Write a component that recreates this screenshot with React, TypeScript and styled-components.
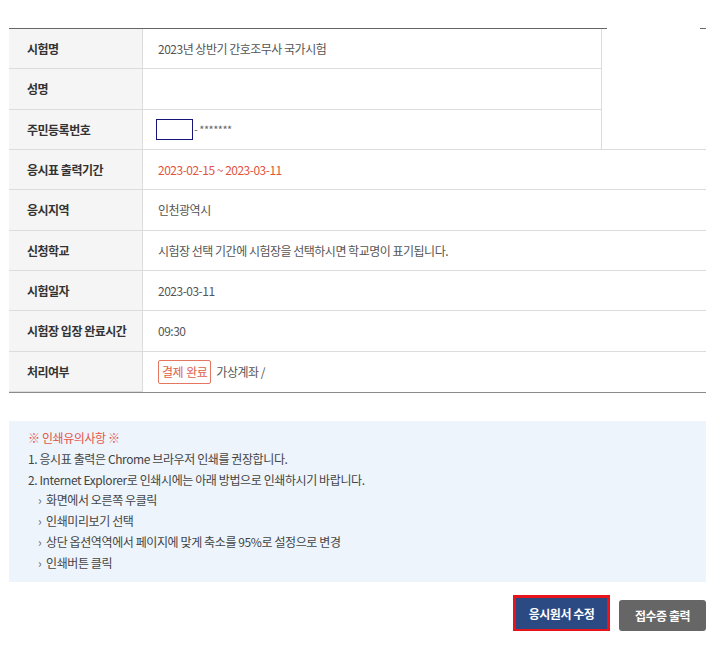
import React from "react";
import styled, { createGlobalStyle } from "styled-components";

const Global = createGlobalStyle`
  html, body { margin: 0; padding: 0; background: #fff; }
  body { font-family: "Noto Sans CJK KR", "Noto Sans", sans-serif; color: #444; }
  * { box-sizing: border-box; }
`;

const Page = styled.div`
  width: 728px;
  padding: 28px 22px 0 9px;
`;

const TopRule = styled.div`
  height: 1px;
  background: linear-gradient(to right, #666 0, #666 598px, transparent 598px, transparent 691px, #666 691px);
`;

const Grid = styled.div`
  display: grid;
  grid-template-columns: 134px 458px 105px;
  border-bottom: 1px solid #8a8a8a;
`;

const Label = styled.div`
  grid-column: 1;
  height: 40.33px;
  display: flex;
  align-items: center;
  padding-left: 18px;
  background: #f5f5f5;
  border-right: 1px solid #dcdcdc;
  border-bottom: 1px solid #dcdcdc;
  font-size: 12px;
  font-weight: 700;
  color: #333;
  letter-spacing: -0.5px;
  &:last-of-type { border-bottom: none; }
`;

const Value = styled.div<{ $wide?: boolean; $last?: boolean; $tone?: string }>`
  grid-column: ${(p) => (p.$wide ? "2 / 4" : "2")};
  height: 40.33px;
  display: flex;
  align-items: center;
  gap: 5px;
  padding-left: 15px;
  border-bottom: ${(p) => (p.$last ? "none" : "1px solid #dcdcdc")};
  font-size: 12px;
  color: ${(p) => p.$tone ?? "#555"};
  letter-spacing: -0.5px;
`;

const Photo = styled.div`
  grid-column: 3;
  grid-row: 1 / 4;
  border-left: 1px solid #dcdcdc;
  border-bottom: 1px solid #dcdcdc;
`;

const IdInput = styled.span`
  display: inline-block;
  width: 37px;
  height: 21px;
  border: 1px solid #16167a;
  margin-left: -2px;
`;

const Masked = styled.span`
  font-size: 11px;
  color: #666;
  margin-left: -4px;
  align-self: flex-start;
  margin-top: 11px;
`;

const Badge = styled.span`
  display: inline-flex;
  align-items: center;
  height: 24px;
  padding: 0 3px;
  border: 1px solid #e5765f;
  border-radius: 2px;
  color: #e0604c;
  font-size: 12px;
  letter-spacing: -0.5px;
  word-spacing: 1px;
`;

const Notice = styled.div`
  margin-top: 28px;
  background: #edf4fb;
  padding: 7px 19px 8px;
  font-size: 12px;
  line-height: 20.8px;
  color: #444;
  letter-spacing: -0.4px;
`;

const NoticeTitle = styled.div`
  color: #e4554a;
`;

const SubItem = styled.div`
  padding-left: 10px;
  &::before {
    content: "›";
    display: inline-block;
    width: 8px;
    color: #666;
  }
`;

const Actions = styled.div`
  display: flex;
  justify-content: flex-end;
  align-items: center;
  gap: 12px;
  margin-top: 18px;
`;

const Button = styled.button<{ $primary?: boolean }>`
  height: 31px;
  padding: 0;
  white-space: nowrap;
  border: none;
  border-radius: ${(p) => (p.$primary ? "0" : "3px")};
  background: ${(p) => (p.$primary ? "#2b4a84" : "#666666")};
  color: #fff;
  font-family: "Noto Sans CJK KR", sans-serif;
  font-size: 12px;
  font-weight: 700;
  letter-spacing: -0.5px;
  outline: ${(p) => (p.$primary ? "3px solid #e8141c" : "none")};
  width: ${(p) => (p.$primary ? "91px" : "87px")};
  margin-top: ${(p) => (p.$primary ? "-3px" : "0")};
`;

export default function App() {
  return (
    <Page>
      <Global />
      <TopRule />
      <Grid>
        <Label>시험명</Label>
        <Value>2023년 상반기 간호조무사 국가시험</Value>
        <Photo />
        <Label>성명</Label>
        <Value />
        <Label>주민등록번호</Label>
        <Value>
          <IdInput />
          <Masked>- *******</Masked>
        </Value>
        <Label>응시표 출력기간</Label>
        <Value $wide $tone="#e2543f">2023-02-15 ~ 2023-03-11</Value>
        <Label>응시지역</Label>
        <Value $wide>인천광역시</Value>
        <Label>신청학교</Label>
        <Value $wide>시험장 선택 기간에 시험장을 선택하시면 학교명이 표기됩니다.</Value>
        <Label>시험일자</Label>
        <Value $wide>2023-03-11</Value>
        <Label>시험장 입장 완료시간</Label>
        <Value $wide>09:30</Value>
        <Label>처리여부</Label>
        <Value $wide $last>
          <Badge>결제 완료</Badge>
          가상계좌 /
        </Value>
      </Grid>
      <Notice>
        <NoticeTitle>※ 인쇄유의사항 ※</NoticeTitle>
        <div>1. 응시표 출력은 Chrome 브라우저 인쇄를 권장합니다.</div>
        <div>2. Internet Explorer로 인쇄시에는 아래 방법으로 인쇄하시기 바랍니다.</div>
        <SubItem>화면에서 오른쪽 우클릭</SubItem>
        <SubItem>인쇄미리보기 선택</SubItem>
        <SubItem>상단 옵션역역에서 페이지에 맞게 축소를 95%로 설정으로 변경</SubItem>
        <SubItem>인쇄버튼 클릭</SubItem>
      </Notice>
      <Actions>
        <Button $primary>응시원서 수정</Button>
        <Button>접수증 출력</Button>
      </Actions>
    </Page>
  );
}
